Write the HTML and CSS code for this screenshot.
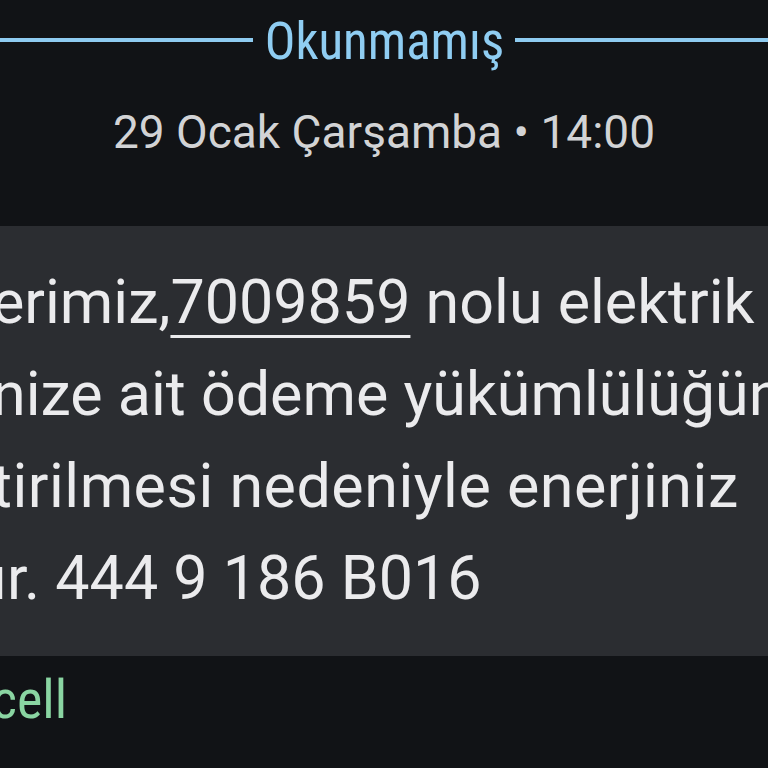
FILE: index.html
```html
<!DOCTYPE html>
<html lang="tr">
<head>
<meta charset="utf-8">
<title>Mesajlar</title>
<link rel="stylesheet" href="styles.css">
</head>
<body>
<div class="screen">
  <div class="divider">
    <span class="rule"></span>
    <span class="divider-label">Okunmamış</span>
    <span class="rule"></span>
  </div>
  <div class="date">29 Ocak Çarşamba • 14:00</div>
  <div class="bubble">
    <div class="line"><span class="pre">Değerli müşt</span><span class="vis">erimiz,<span class="link">7009859</span> nolu elektrik</span></div>
    <div class="line"><span class="pre">sözleşme</span><span class="vis">nize ait ödeme yükümlülüğünüzün</span></div>
    <div class="line"><span class="pre">yerine ge</span><span class="vis wide">tirilmesi nedeniyle enerjiniz</span></div>
    <div class="line"><span class="pre">bağlanacakt</span><span class="vis">ır. 444 9 186 B016</span></div>
  </div>
  <div class="sender"><span class="pre">Turk</span><span class="vis">cell</span></div>
</div>
</body>
</html>
```

FILE: styles.css
```css
html, body {
  margin: 0;
  padding: 0;
  overflow: hidden;
  background: #111316;
}

.screen {
  width: 768px;
  height: 768px;
  overflow: hidden;
  background: #111316;
  font-family: Roboto, "Noto Sans", sans-serif;
  --edge: 708px;
}

.divider {
  display: flex;
  align-items: center;
  padding-top: 12px;
  height: 60px;
}

.rule {
  flex: 1;
  height: 4px;
  margin-bottom: 4px;
  background: #8ecbf0;
}

.divider-label {
  padding: 0 11px 0 12px;
  font-family: "Liberation Sans Narrow", "Roboto Condensed", Roboto, sans-serif;
  font-size: 51px;
  line-height: 60px;
  color: #8fcdf2;
  white-space: nowrap;
}

.date {
  margin-top: 30px;
  text-align: center;
  font-size: 46px;
  line-height: 60px;
  color: #d2d3d5;
  white-space: nowrap;
}

.bubble {
  margin-top: 64px;
  margin-left: calc(-1 * var(--edge));
  width: 2000px;
  padding: 30px 0 32px;
  background: #2b2d31;
  font-size: 61px;
  line-height: 92px;
  color: #ebebed;
}

.line {
  display: flex;
  white-space: nowrap;
}

.pre {
  flex: none;
  width: 700px;
  text-align: right;
  white-space: nowrap;
}

.vis {
  white-space: nowrap;
}

.wide {
  letter-spacing: 0.5px;
}

.link {
  text-decoration: underline;
  text-decoration-thickness: 3px;
  text-underline-offset: 12px;
}

.sender {
  display: flex;
  margin-left: -708px;
  margin-top: 14px;
  font-family: "Liberation Sans Narrow", "Roboto Condensed", Roboto, sans-serif;
  font-size: 54px;
  line-height: 60px;
  color: #8ad5a2;
}
```
